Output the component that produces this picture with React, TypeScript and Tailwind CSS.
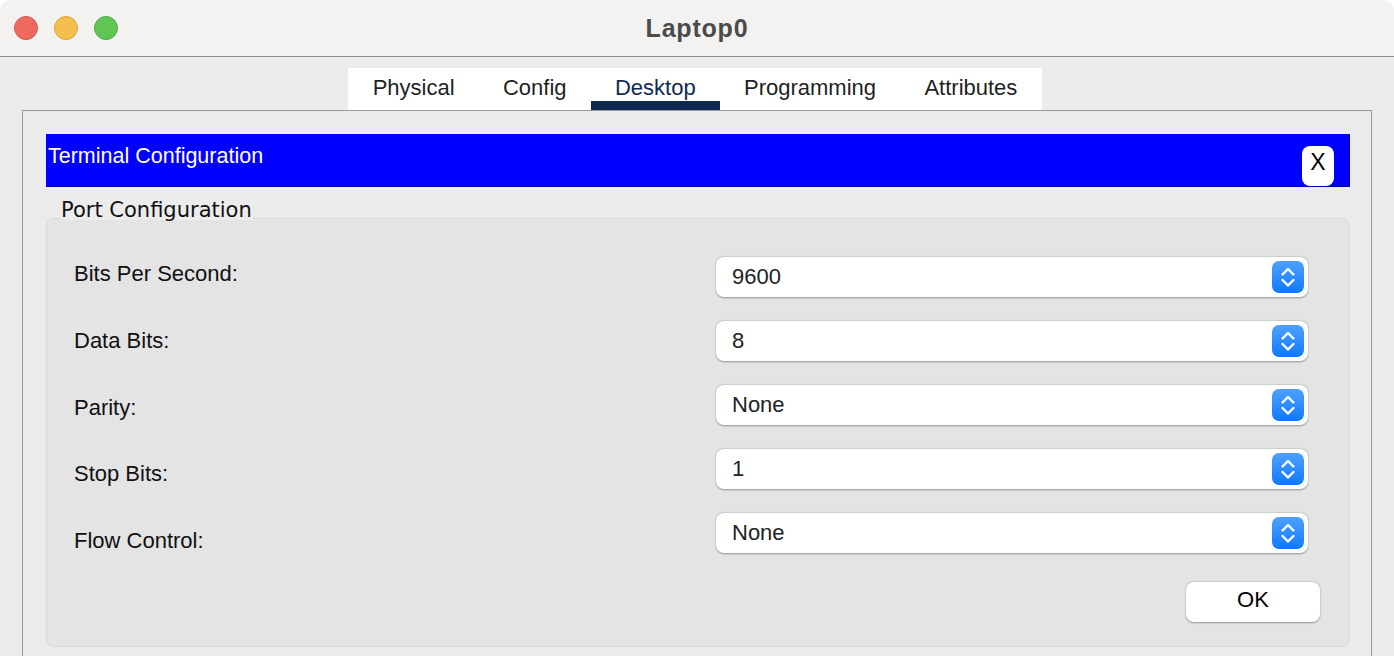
import React from "react";

const tabs = ["Physical", "Config", "Desktop", "Programming", "Attributes"];

const fields = [
  { label: "Bits Per Second:", value: "9600" },
  { label: "Data Bits:", value: "8" },
  { label: "Parity:", value: "None" },
  { label: "Stop Bits:", value: "1" },
  { label: "Flow Control:", value: "None" },
];

function Stepper() {
  return (
    <div className="w-[32px] h-[32px] rounded-[7px] bg-gradient-to-b from-[#4ba2ff] to-[#0a78ff] flex items-center justify-center">
      <svg width="32" height="32" viewBox="0 0 32 32" fill="none">
        <path d="M10.5 13.5 L16 8 L21.5 13.5" stroke="white" strokeWidth="2.4" strokeLinecap="round" strokeLinejoin="round" />
        <path d="M10.5 19 L16 24.5 L21.5 19" stroke="white" strokeWidth="2.4" strokeLinecap="round" strokeLinejoin="round" />
      </svg>
    </div>
  );
}

export default function App() {
  return (
    <div className="w-[1394px] h-[656px] overflow-hidden bg-white font-['Liberation_Sans',Arial,sans-serif]">
      <div className="h-full flex flex-col rounded-t-[10px] overflow-hidden">
        {/* title bar */}
        <div className="h-[57px] shrink-0 bg-[#f3f2f1] border-b border-[#8c8c8c] grid grid-cols-[1fr_auto_1fr] items-center">
          <div className="flex items-center gap-[16px] pl-[14px]">
            <span className="w-[24px] h-[24px] rounded-full bg-[#ee6a5f] border border-[#d4574d]" />
            <span className="w-[24px] h-[24px] rounded-full bg-[#f5bf4f] border border-[#dba43a]" />
            <span className="w-[24px] h-[24px] rounded-full bg-[#61c554] border border-[#4fa842]" />
          </div>
          <div className="text-[25px] font-bold text-[#4b4b4b] tracking-[0.8px] leading-none">Laptop0</div>
          <div />
        </div>

        {/* body */}
        <div className="flex-1 bg-[#ececec] px-[22px] flex flex-col">
          <div className="flex justify-center pt-[11px] pr-[4px]">
            <div className="bg-white h-[42px] flex">
              {tabs.map((tab) => (
                <div
                  key={tab}
                  className={
                    tab === "Desktop"
                      ? "relative px-[24.2px] pb-[4px] flex items-center text-[22px] text-[#0f2a52]"
                      : "relative px-[24.2px] pb-[4px] flex items-center text-[22px] text-[#1f1f1f]"
                  }
                >
                  {tab}
                  {tab === "Desktop" && (
                    <div className="absolute left-0 right-0 bottom-0 h-[9px] bg-[#0f2a50]" />
                  )}
                </div>
              ))}
            </div>
          </div>

          <div className="flex-1 border-t border-l border-r border-[#9a9a9a] bg-[#ebebeb] pl-[23px] pr-[21px] pt-[23px]">
            <div className="h-[53px] bg-[#0000ff] border-b border-r border-[#0000b8] flex justify-between items-start">
              <div className="pl-[2px] pt-[10px] text-[21.5px] leading-[25px] text-white">Terminal Configuration</div>
              <div className="mt-[12px] mr-[15px] w-[32px] h-[40px] pb-[7px] bg-white rounded-[8px] flex items-center justify-center text-[23px] text-black">
                X
              </div>
            </div>

            <div className="mt-[11px] flex flex-col">
              <div className="self-start ml-[14px] px-[1px] h-[22px] leading-[22px] pt-[1px] bg-[#ececec] text-[21px] text-[#111] font-['DejaVu_Sans',sans-serif] relative z-10 -mb-[2px]">
                Port Configuration
              </div>
              <div className="h-[429px] bg-[#e4e4e4] border border-[#d9d9d9] rounded-[8px] flex flex-col">
                <div className="h-[334px] flex justify-between items-start pr-[41px]">
                  <div className="pl-[27px] pt-[42px] flex flex-col gap-[40.75px]">
                    {fields.map((f) => (
                      <div key={f.label} className="text-[22px] leading-[26px] text-[#111]">
                        {f.label}
                      </div>
                    ))}
                  </div>
                  <div className="pt-[38px] w-[592px] flex flex-col gap-[24px]">
                    {fields.map((f) => (
                      <div
                        key={f.label}
                        className="h-[40px] bg-white rounded-[8px] shadow-[0_0.5px_2px_rgba(0,0,0,0.35)] flex items-center justify-between pl-[16px] pr-[4px]"
                      >
                        <span className="text-[22px] text-[#222] pb-[2px]">{f.value}</span>
                        <Stepper />
                      </div>
                    ))}
                  </div>
                </div>
                <div className="flex justify-end pr-[29px] mt-[29px]">
                  <div className="w-[134px] h-[40px] pb-[5px] bg-white rounded-[8px] shadow-[0_0.5px_2px_rgba(0,0,0,0.35)] flex items-center justify-center text-[22px] text-black">
                    OK
                  </div>
                </div>
              </div>
            </div>
          </div>
        </div>
      </div>
    </div>
  );
}
